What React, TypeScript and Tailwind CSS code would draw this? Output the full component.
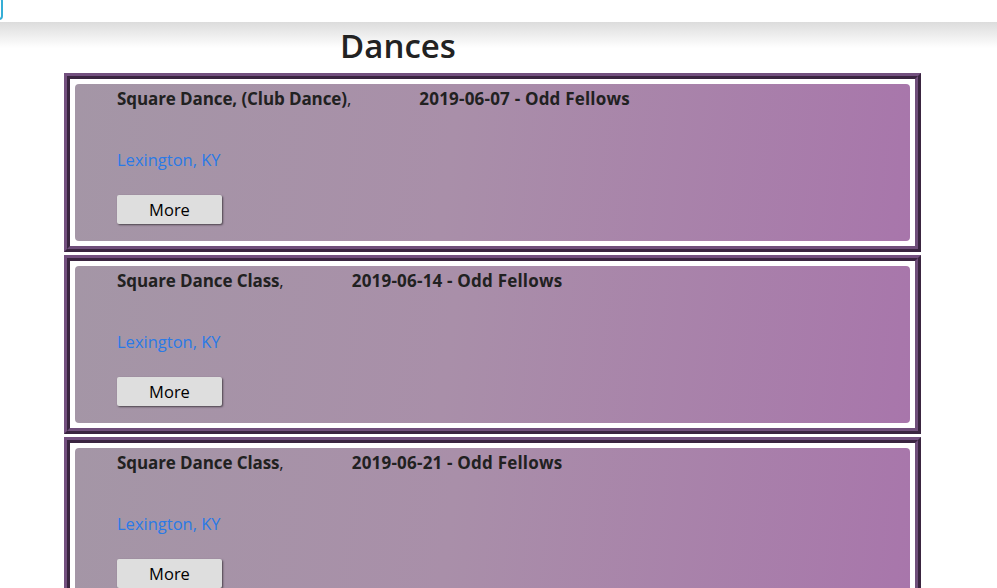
const dances = [
  { title: "Square Dance, (Club Dance)", date: "2019-06-07 - Odd Fellows", place: "Lexington, KY" },
  { title: "Square Dance Class", date: "2019-06-14 - Odd Fellows", place: "Lexington, KY" },
  { title: "Square Dance Class", date: "2019-06-21 - Odd Fellows", place: "Lexington, KY" },
];

const DanceCard = ({ title, date, place }: { title: string; date: string; place: string }) => (
  <div className="w-[857px] border-[3px] border-t-[#73507f] border-l-[#73507f] border-b-[#3a2540] border-r-[#3a2540]">
    <div className="border-[3px] border-t-[#3a2540] border-l-[#3a2540] border-b-[#6f4e7a] border-r-[#6f4e7a] bg-white p-[5px]">
      <div className="rounded-[4px] bg-[linear-gradient(97deg,#a496a6_0%,#a98fa9_45%,#a876ab_100%)] pl-[42px] pt-[3px] pb-[17px]">
        <div className="leading-6 text-[17px] text-[#212121]">
          <span className="font-bold tracking-[-0.1px]">{title}</span>
          <span>,</span>
          <span className="ml-[68px] font-bold tracking-[0.2px]">{date}</span>
        </div>
        <div className="mt-[37px] leading-6 text-[16.5px] text-[#2a7ae6]">{place}</div>
        <button className="mt-[23px] h-[29px] w-[105px] rounded-[2px] bg-[#dedede] pt-[2px] text-[16.5px] text-black shadow-[1px_1px_2px_rgba(0,0,0,0.55)]">
          More
        </button>
      </div>
    </div>
  </div>
);

export default function App() {
  return (
    <div className="min-h-[588px] bg-white font-['Open_Sans','Noto_Sans',sans-serif] overflow-hidden">
      <div className="relative h-[22px] bg-white">
        <div className="absolute -left-[100px] -top-[3px] h-[23px] w-[103px] rounded-[4px] border-2 border-[#35aed6]" />
      </div>
      <div className="bg-[linear-gradient(to_bottom,#dcdcdc,#ffffff_26px)] pt-[4px]">
        <h1 className="w-[796px] text-center text-[33px] font-semibold leading-[40px] text-[#222]">Dances</h1>
        <div className="ml-[64px] mt-[7px] flex flex-col gap-[3px]">
          {dances.map((d, i) => (
            <DanceCard key={i} {...d} />
          ))}
        </div>
      </div>
    </div>
  );
}
